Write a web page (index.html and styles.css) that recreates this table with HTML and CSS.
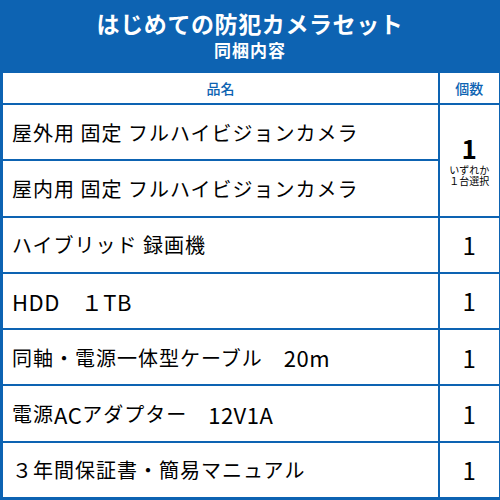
FILE: index.html
```html
<!DOCTYPE html>
<html lang="ja">
<head>
<meta charset="utf-8">
<link rel="stylesheet" href="styles.css">
</head>
<body>
<div class="page">
  <header class="head">
    <div class="title">はじめての防犯カメラセット</div>
    <div class="subtitle">同梱内容</div>
  </header>
  <div class="table">
    <div class="cell th">品名</div>
    <div class="cell th num">個数</div>
    <div class="cell item">屋外用 固定 フルハイビジョンカメラ</div>
    <div class="cell num choose">
      <span class="big">1</span>
      <span class="note first">いずれか</span>
      <span class="note">１台選択</span>
    </div>
    <div class="cell item">屋内用 固定 フルハイビジョンカメラ</div>
    <div class="cell item">ハイブリッド 録画機</div>
    <div class="cell num qty">1</div>
    <div class="cell item"><span class="lat">HDD</span>　 <span class="lat">１TB</span></div>
    <div class="cell num qty">1</div>
    <div class="cell item">同軸・電源一体型ケーブル　 <span class="lat">20m</span></div>
    <div class="cell num qty">1</div>
    <div class="cell item">電源<span class="lat">AC</span>アダプター　 <span class="lat">12V1A</span></div>
    <div class="cell num qty">1</div>
    <div class="cell item">３年間保証書・簡易マニュアル</div>
    <div class="cell num qty">1</div>
  </div>
</div>
</body>
</html>
```

FILE: styles.css
```css
html, body {
  margin: 0;
  padding: 0;
}
body {
  font-family: "Noto Sans CJK JP", "Noto Sans", sans-serif;
  background: #ffffff;
}
.page {
  width: 500px;
  height: 500px;
  background: #0d63b2;
  display: flex;
  flex-direction: column;
  overflow: hidden;
}
.head {
  height: 73px;
  display: flex;
  flex-direction: column;
  align-items: center;
  color: #ffffff;
  font-weight: 700;
}
.title {
  font-size: 23px;
  line-height: 28px;
  letter-spacing: 0.6px;
  margin-top: 9px;
}
.subtitle {
  font-size: 17px;
  line-height: 20px;
  letter-spacing: 1px;
  margin-top: 3px;
}
.table {
  flex: 1;
  display: grid;
  grid-template-columns: 1fr 58.5px;
  grid-template-rows: 30px repeat(7, 1fr);
  gap: 2px;
  padding: 0 1.5px 3px 3px;
}
.cell {
  background: #ffffff;
  display: flex;
  align-items: center;
}
.th {
  justify-content: center;
  color: #0d63b2;
  font-size: 14px;
  font-weight: 500;
}
.item {
  padding-left: 9px;
  font-size: 20px;
  font-weight: 400;
  letter-spacing: 1px;
  color: #000000;
  white-space: nowrap;
}
.lat {
  font-size: 22px;
  letter-spacing: 0.5px;
}
.num {
  justify-content: center;
}
.qty {
  font-size: 24px;
  font-weight: 400;
  color: #000000;
}
.choose {
  grid-row: span 2;
  flex-direction: column;
  color: #000000;
}
.big {
  font-size: 26px;
  font-weight: 700;
  line-height: 28px;
}
.note {
  font-size: 10px;
  line-height: 11px;
}
.note.first {
  margin-top: 2px;
}
```
